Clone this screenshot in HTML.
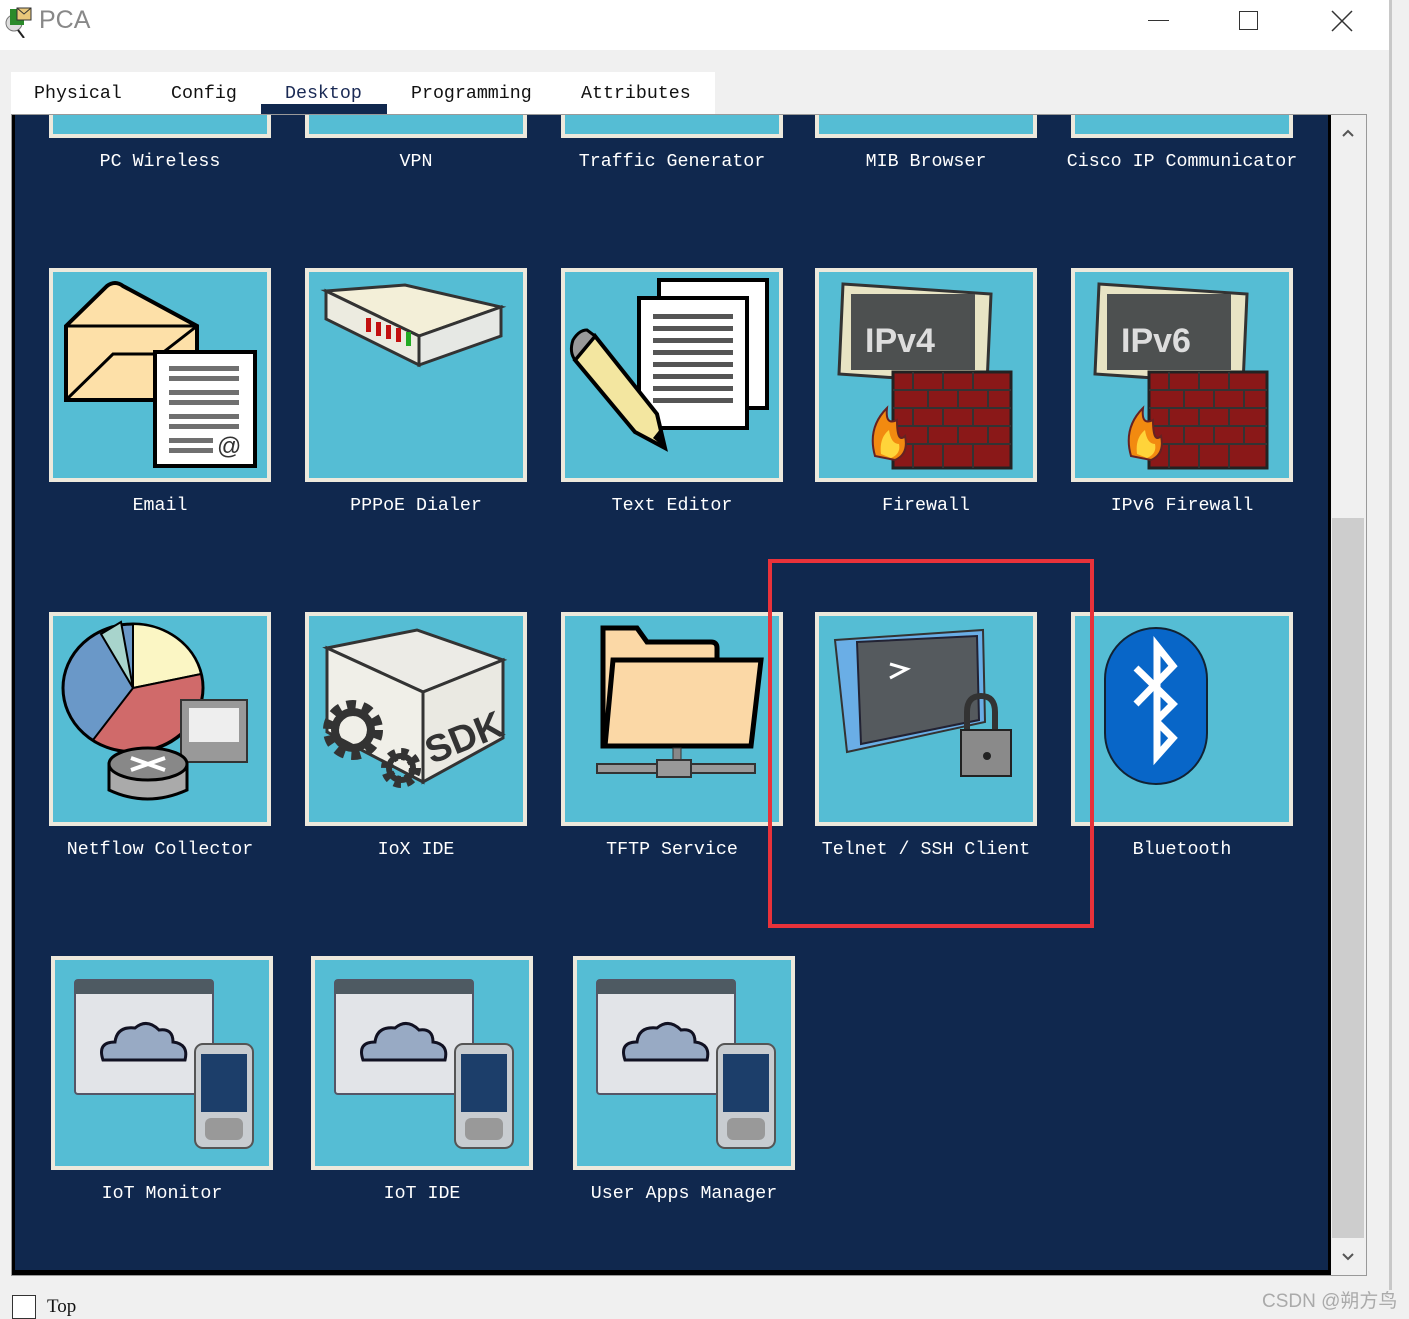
<!DOCTYPE html>
<html><head><meta charset="utf-8"><style>
*{margin:0;padding:0;box-sizing:border-box}
body{width:1409px;height:1316px;background:#f0f0f0;position:relative;overflow:hidden;font-family:"Liberation Mono",monospace}
.a{position:absolute}
.tile{position:absolute;width:222px;height:214px;background:#55bdd4;border:4px solid #ede9dc}
.tile svg{position:absolute;left:-4px;top:-4px}
.lbl{position:absolute;width:300px;text-align:center;color:#fff;font-size:18.3px;font-family:"Liberation Mono",monospace}
.tab{position:absolute;top:84px;font-size:18.3px;color:#111}
</style></head><body>
<div class="a" style="left:0;top:0;width:1390px;height:50px;background:#fff"></div>
<svg class="a" style="left:2px;top:4px" width="34" height="34" viewBox="0 0 34 34"><circle cx="12" cy="19" r="8" fill="#ddd" stroke="#777"/><rect x="8" y="5" width="14" height="16" fill="#2a8a2a"/><path d="M15 4h14v12H15z" fill="#e9c77a" stroke="#333"/><path d="M15 4l7 6 7-6" fill="none" stroke="#333"/><path d="M16 26l6 8" stroke="#222" stroke-width="2"/></svg>
<div class="a" style="left:39px;top:6px;font-family:'Liberation Sans',sans-serif;font-size:25px;color:#888">PCA</div>
<div class="a" style="left:1148px;top:20px;width:21px;height:1px;background:#333"></div>
<div class="a" style="left:1239px;top:11px;width:19px;height:19px;border:1.5px solid #333"></div>
<svg class="a" style="left:1331px;top:10px" width="22" height="22"><path d="M1 1L21 21M21 1L1 21" stroke="#333" stroke-width="1.5"/></svg>
<div class="a" style="left:1389px;top:0;width:3px;height:1290px;background:#c8c8c8"></div>
<div class="a" style="left:11px;top:72px;width:704px;height:42px;background:#fff"></div>
<div class="tab" style="left:34px">Physical</div>
<div class="tab" style="left:171px">Config</div>
<div class="tab" style="left:285px;color:#1a2a55">Desktop</div>
<div class="tab" style="left:411px">Programming</div>
<div class="tab" style="left:581px">Attributes</div>
<div class="a" style="left:261px;top:104px;width:126px;height:10px;background:#10284e"></div>
<div class="a" style="left:11px;top:114px;width:1356px;height:1162px;border:1px solid #999;background:#f0f0f0"></div>
<div class="a" style="left:12px;top:115px;width:1319px;height:1160px;background:#000"></div>
<div class="a" style="left:15px;top:115px;width:1313px;height:1155px;background:#10284e"></div>
<div class="a" style="left:1332px;top:518px;width:32px;height:720px;background:#cdcdcd"></div>
<svg class="a" style="left:1341px;top:128px" width="14" height="10"><path d="M2 8l5-5 5 5" fill="none" stroke="#555" stroke-width="2"/></svg>
<svg class="a" style="left:1341px;top:1252px" width="14" height="10"><path d="M2 2l5 5 5-5" fill="none" stroke="#555" stroke-width="2"/></svg>
<div class="a" style="left:12px;top:1295px;width:24px;height:24px;border:1.5px solid #333;background:#fff"></div>
<div class="a" style="left:47px;top:1296px;font-family:'Liberation Serif',serif;font-size:19px;color:#111">Top</div>
<div class="a" style="left:1262px;top:1286px;font-family:'Liberation Sans','Noto Sans CJK SC',sans-serif;font-size:19px;color:#aaa">CSDN @朔方鸟</div>

<div class="a" style="left:49px;top:115px;width:222px;height:23px;background:#55bdd4;border:4px solid #ede9dc;border-top:none"></div>
<div class="a" style="left:305px;top:115px;width:222px;height:23px;background:#55bdd4;border:4px solid #ede9dc;border-top:none"></div>
<div class="a" style="left:561px;top:115px;width:222px;height:23px;background:#55bdd4;border:4px solid #ede9dc;border-top:none"></div>
<div class="a" style="left:815px;top:115px;width:222px;height:23px;background:#55bdd4;border:4px solid #ede9dc;border-top:none"></div>
<div class="a" style="left:1071px;top:115px;width:222px;height:23px;background:#55bdd4;border:4px solid #ede9dc;border-top:none"></div>
<div class="lbl" style="left:10px;top:152px">PC Wireless</div>
<div class="lbl" style="left:266px;top:152px">VPN</div>
<div class="lbl" style="left:522px;top:152px">Traffic Generator</div>
<div class="lbl" style="left:776px;top:152px">MIB Browser</div>
<div class="lbl" style="left:1032px;top:152px">Cisco IP Communicator</div>

<div class="tile" style="left:49px;top:268px"><svg width="222" height="214"><path d="M17 58L58 18Q66 12 74 18L148 58V132H17Z" fill="#fde0a8" stroke="#000" stroke-width="4"/><path d="M17 58L148 58M17 132L64 86H112L148 58" fill="none" stroke="#000" stroke-width="3"/><rect x="106" y="84" width="100" height="114" fill="#fff" stroke="#000" stroke-width="4"/><g fill="#707070"><rect x="120" y="98" width="70" height="5"/><rect x="120" y="108" width="70" height="5"/><rect x="120" y="122" width="70" height="5"/><rect x="120" y="132" width="70" height="5"/><rect x="120" y="146" width="70" height="5"/><rect x="120" y="156" width="70" height="5"/><rect x="120" y="170" width="44" height="5"/><rect x="120" y="180" width="44" height="5"/></g><text x="168" y="186" font-size="24" font-family="Liberation Sans" fill="#333">@</text></svg></div>
<div class="tile" style="left:305px;top:268px"><svg width="222" height="214"><path d="M21 23L100 17L196 39L114 68Z" fill="#f3efd8" stroke="#333" stroke-width="3"/><path d="M21 23L21 51L114 97L114 68Z" fill="#ecebe0" stroke="#333" stroke-width="3"/><path d="M114 68L196 39L196 68L114 97Z" fill="#e6e8e4" stroke="#333" stroke-width="3"/><g fill="#c21010"><rect x="61" y="50" width="5" height="14"/><rect x="71" y="54" width="5" height="14"/><rect x="81" y="57" width="5" height="14"/><rect x="91" y="60" width="5" height="14"/></g><rect x="101" y="64" width="5" height="14" fill="#22aa22"/></svg></div>
<div class="tile" style="left:561px;top:268px"><svg width="222" height="214"><rect x="98" y="12" width="108" height="128" fill="#fff" stroke="#000" stroke-width="4"/><rect x="78" y="30" width="108" height="130" fill="#fff" stroke="#000" stroke-width="4"/><g fill="#555"><rect x="92" y="46" width="80" height="5"/><rect x="92" y="58" width="80" height="5"/><rect x="92" y="70" width="80" height="5"/><rect x="92" y="82" width="80" height="5"/><rect x="92" y="94" width="80" height="5"/><rect x="92" y="106" width="80" height="5"/><rect x="92" y="118" width="80" height="5"/><rect x="92" y="130" width="80" height="5"/></g><path d="M14 92L34 68L96 146L104 180L74 164Z" fill="#f3e6a0" stroke="#000" stroke-width="4"/><path d="M14 92L34 68L26 62Q18 62 12 72Q8 84 14 92Z" fill="#999" stroke="#000" stroke-width="3"/><path d="M92 170L104 180L100 160Z" fill="#000"/></svg></div>
<div class="tile" style="left:815px;top:268px"><svg width="222" height="214"><path d="M28 16L176 26L172 116L24 106Z" fill="#e8e4c4" stroke="#333" stroke-width="3"/><rect x="36" y="26" width="124" height="76" fill="#4d5050"/><text x="50" y="84" font-size="34" font-weight="bold" font-family="Liberation Sans" fill="#ddd">IPv4</text><rect x="78" y="104" width="118" height="96" fill="#8a1818" stroke="#222" stroke-width="3"/><g stroke="#333" stroke-width="2"><path d="M78 122H196M78 140H196M78 158H196M78 176H196"/><path d="M98 104v18M128 104v18M158 104v18M113 122v18M143 122v18M173 122v18M98 140v18M128 140v18M158 140v18M113 158v18M143 158v18M173 158v18M98 176v24M128 176v24M158 176v24"/></g><path d="M60 188Q52 160 72 140Q70 158 82 152Q82 176 90 168Q94 186 80 192Z" fill="#f28a10" stroke="#622" stroke-width="2"/><path d="M66 186Q64 170 74 162Q76 176 84 176Q86 186 76 190Z" fill="#ffd43a"/></svg></div>
<div class="tile" style="left:1071px;top:268px"><svg width="222" height="214"><path d="M28 16L176 26L172 116L24 106Z" fill="#e8e4c4" stroke="#333" stroke-width="3"/><rect x="36" y="26" width="124" height="76" fill="#4d5050"/><text x="50" y="84" font-size="34" font-weight="bold" font-family="Liberation Sans" fill="#ddd">IPv6</text><rect x="78" y="104" width="118" height="96" fill="#8a1818" stroke="#222" stroke-width="3"/><g stroke="#333" stroke-width="2"><path d="M78 122H196M78 140H196M78 158H196M78 176H196"/><path d="M98 104v18M128 104v18M158 104v18M113 122v18M143 122v18M173 122v18M98 140v18M128 140v18M158 140v18M113 158v18M143 158v18M173 158v18M98 176v24M128 176v24M158 176v24"/></g><path d="M60 188Q52 160 72 140Q70 158 82 152Q82 176 90 168Q94 186 80 192Z" fill="#f28a10" stroke="#622" stroke-width="2"/><path d="M66 186Q64 170 74 162Q76 176 84 176Q86 186 76 190Z" fill="#ffd43a"/></svg></div>
<div class="lbl" style="left:10px;top:496px">Email</div>
<div class="lbl" style="left:266px;top:496px">PPPoE Dialer</div>
<div class="lbl" style="left:522px;top:496px">Text Editor</div>
<div class="lbl" style="left:776px;top:496px">Firewall</div>
<div class="lbl" style="left:1032px;top:496px">IPv6 Firewall</div>

<div class="tile" style="left:49px;top:612px"><svg width="222" height="214"><ellipse cx="84" cy="76" rx="70" ry="64" fill="#6a98c8" stroke="#000" stroke-width="3"/><path d="M84 76L84 12A70 64 0 0 1 152 62Z" fill="#fbf6c4" stroke="#000" stroke-width="2"/><path d="M84 76L152 62A70 64 0 0 1 44 128Z" fill="#d06a6a" stroke="#000" stroke-width="2"/><path d="M84 76L72 10L52 22Z" fill="#a8d4cc" stroke="#000" stroke-width="2"/><rect x="132" y="88" width="66" height="62" fill="#999" stroke="#333" stroke-width="2"/><rect x="140" y="96" width="50" height="34" fill="#eee"/><path d="M60 152V178Q98 196 138 178V152Z" fill="#aaa" stroke="#000" stroke-width="3"/><ellipse cx="99" cy="152" rx="39" ry="16" fill="#888" stroke="#000" stroke-width="3"/><path d="M82 146L116 158M82 158L116 146" stroke="#fff" stroke-width="4"/></svg></div>
<div class="tile" style="left:305px;top:612px"><svg width="222" height="214"><path d="M22 36L112 18L198 48L118 80Z" fill="#ecebe6" stroke="#333" stroke-width="3"/><path d="M22 36L22 120L118 170L118 80Z" fill="#f0efe8" stroke="#333" stroke-width="3"/><path d="M118 80L198 48L198 126L118 170Z" fill="#eae9e2" stroke="#333" stroke-width="3"/><text x="120" y="142" font-size="38" font-family="Liberation Sans" font-weight="bold" fill="#333" transform="rotate(-22 150 130)">SDK</text><circle cx="48" cy="118" r="22" fill="none" stroke="#333" stroke-width="16" stroke-dasharray="8 6"/><circle cx="48" cy="118" r="18" fill="none" stroke="#333" stroke-width="8"/><circle cx="96" cy="156" r="14" fill="none" stroke="#333" stroke-width="12" stroke-dasharray="6 5"/><circle cx="96" cy="156" r="12" fill="none" stroke="#333" stroke-width="6"/></svg></div>
<div class="tile" style="left:561px;top:612px"><svg width="222" height="214"><path d="M42 16H76L86 30H150Q156 30 156 36V134H42Z" fill="#fbd8a6" stroke="#000" stroke-width="5"/><path d="M52 48H200L190 134H44Z" fill="#fbd8a6" stroke="#000" stroke-width="5"/><rect x="112" y="136" width="8" height="14" fill="#888" stroke="#333"/><rect x="36" y="152" width="158" height="9" fill="#999" stroke="#333" stroke-width="2"/><rect x="96" y="148" width="34" height="17" fill="#999" stroke="#333" stroke-width="2"/></svg></div>
<div class="tile" style="left:815px;top:612px"><svg width="222" height="214"><path d="M20 28L168 18L170 110L32 140Z" fill="#6aaee6" stroke="#333" stroke-width="2"/><path d="M42 30L162 24L164 108L46 132Z" fill="#555a5e" stroke="#223" stroke-width="2"/><path d="M75 52L92 57L75 66" fill="none" stroke="#fff" stroke-width="3"/><path d="M152 124V100Q152 84 166 84Q180 84 180 100V124" fill="none" stroke="#333" stroke-width="6"/><rect x="146" y="118" width="50" height="46" fill="#8a8a8a" stroke="#222" stroke-width="2"/><circle cx="172" cy="144" r="4" fill="#222"/></svg></div>
<div class="tile" style="left:1071px;top:612px"><svg width="222" height="214"><rect x="34" y="16" width="102" height="156" rx="51" fill="#0866c8" stroke="#123" stroke-width="2"/><path d="M65 56L102 92L86 108V34L102 54L65 92" fill="none" stroke="#fff" stroke-width="7" stroke-linejoin="miter"/><path d="M86 108V144L102 126L86 110" fill="none" stroke="#fff" stroke-width="7"/></svg></div>
<div class="lbl" style="left:10px;top:840px">Netflow Collector</div>
<div class="lbl" style="left:266px;top:840px">IoX IDE</div>
<div class="lbl" style="left:522px;top:840px">TFTP Service</div>
<div class="lbl" style="left:776px;top:840px">Telnet / SSH Client</div>
<div class="lbl" style="left:1032px;top:840px">Bluetooth</div>

<div class="tile" style="left:51px;top:956px"><svg width="222" height="214"><rect x="24" y="24" width="138" height="114" rx="3" fill="#e2e4e8" stroke="#556" stroke-width="2"/><rect x="24" y="24" width="138" height="14" fill="#4e5a62"/><path d="M52 104Q46 86 64 86Q66 70 84 72Q96 62 108 74Q122 72 122 86Q138 88 134 104Z" fill="#98aac4" stroke="#112" stroke-width="3"/><rect x="144" y="88" width="58" height="104" rx="8" fill="#c8ccd0" stroke="#555" stroke-width="2"/><rect x="150" y="98" width="46" height="58" fill="#1c3e6a"/><rect x="154" y="162" width="38" height="22" rx="6" fill="#999"/></svg></div>
<div class="tile" style="left:311px;top:956px"><svg width="222" height="214"><rect x="24" y="24" width="138" height="114" rx="3" fill="#e2e4e8" stroke="#556" stroke-width="2"/><rect x="24" y="24" width="138" height="14" fill="#4e5a62"/><path d="M52 104Q46 86 64 86Q66 70 84 72Q96 62 108 74Q122 72 122 86Q138 88 134 104Z" fill="#98aac4" stroke="#112" stroke-width="3"/><rect x="144" y="88" width="58" height="104" rx="8" fill="#c8ccd0" stroke="#555" stroke-width="2"/><rect x="150" y="98" width="46" height="58" fill="#1c3e6a"/><rect x="154" y="162" width="38" height="22" rx="6" fill="#999"/></svg></div>
<div class="tile" style="left:573px;top:956px"><svg width="222" height="214"><rect x="24" y="24" width="138" height="114" rx="3" fill="#e2e4e8" stroke="#556" stroke-width="2"/><rect x="24" y="24" width="138" height="14" fill="#4e5a62"/><path d="M52 104Q46 86 64 86Q66 70 84 72Q96 62 108 74Q122 72 122 86Q138 88 134 104Z" fill="#98aac4" stroke="#112" stroke-width="3"/><rect x="144" y="88" width="58" height="104" rx="8" fill="#c8ccd0" stroke="#555" stroke-width="2"/><rect x="150" y="98" width="46" height="58" fill="#1c3e6a"/><rect x="154" y="162" width="38" height="22" rx="6" fill="#999"/></svg></div>
<div class="lbl" style="left:12px;top:1184px">IoT Monitor</div>
<div class="lbl" style="left:272px;top:1184px">IoT IDE</div>
<div class="lbl" style="left:534px;top:1184px">User Apps Manager</div>

<div class="a" style="left:768px;top:559px;width:326px;height:369px;border:4px solid #e8323a"></div>
</body></html>
